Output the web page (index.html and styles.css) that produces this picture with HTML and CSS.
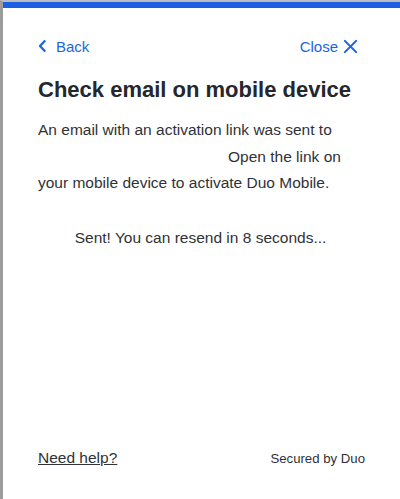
FILE: index.html
```html
<!DOCTYPE html>
<html lang="en">
<head>
<meta charset="utf-8">
<title>Check email on mobile device</title>
<link rel="stylesheet" href="styles.css">
</head>
<body>
<div class="frame">
  <div class="topbar"></div>
  <div class="card">
    <div class="nav">
      <a class="nav-link back" href="#">
        <svg class="chev" viewBox="0 0 8 12" width="8" height="12" aria-hidden="true"><path d="M6.5 1.2 L2 6 L6.5 10.8" fill="none" stroke="currentColor" stroke-width="2.3" stroke-linecap="round" stroke-linejoin="round"/></svg>
        <span>Back</span>
      </a>
      <a class="nav-link close" href="#">
        <span>Close</span>
        <svg class="x" viewBox="0 0 16 16" width="15" height="15" aria-hidden="true"><path d="M2 2 L14 14 M14 2 L2 14" fill="none" stroke="currentColor" stroke-width="2.2" stroke-linecap="round"/></svg>
      </a>
    </div>
    <h1 class="title">Check email on mobile device</h1>
    <p class="desc">An email with an activation link was sent to <span class="hidden-email"></span>Open the link on your mobile device to activate Duo Mobile.</p>
    <p class="status">Sent! You can resend in 8 seconds...</p>
    <div class="footer">
      <a class="help" href="#">Need help?</a>
      <span class="secured">Secured by Duo</span>
    </div>
  </div>
</div>
</body>
</html>
```
FILE: styles.css
```css
html, body {
  margin: 0;
  padding: 0;
  background: #ffffff;
}
body {
  font-family: "Liberation Sans", Arial, sans-serif;
  color: #2f3237;
}
.frame {
  box-sizing: border-box;
  height: 499px;
  border-top: 2px solid #b9bcc0;
  border-left: 3px solid #9c9c9c;
  display: flex;
  flex-direction: column;
}
.topbar {
  height: 6px;
  background: #1b5fe3;
}
.card {
  flex: 1;
  display: flex;
  flex-direction: column;
  padding: 28px 42px 0 35px;
}
.nav {
  display: flex;
  justify-content: space-between;
  align-items: center;
  height: 20px;
}
.nav-link {
  display: flex;
  align-items: center;
  color: #1a66e0;
  text-decoration: none;
  font-size: 15px;
}
.back .chev {
  margin-right: 10px;
}
.close .x {
  margin-left: 5px;
}
.title {
  margin: 21px 0 0;
  font-size: 22px;
  font-weight: bold;
  color: #24272c;
  line-height: 26px;
}
.desc {
  margin: 14px 0 0;
  font-size: 15.5px;
  line-height: 26.5px;
}
.hidden-email {
  display: inline-block;
  width: 190px;
}
.status {
  margin: 31px 0 0;
  padding-left: 5px;
  text-align: center;
  font-size: 15.5px;
  line-height: 20px;
}
.footer {
  margin-top: auto;
  margin-bottom: 32px;
  display: flex;
  justify-content: space-between;
  align-items: center;
}
.help {
  color: #2f3237;
  font-size: 15.5px;
  text-decoration: underline;
}
.secured {
  font-size: 13.2px;
  margin-right: -7px;
}
```
